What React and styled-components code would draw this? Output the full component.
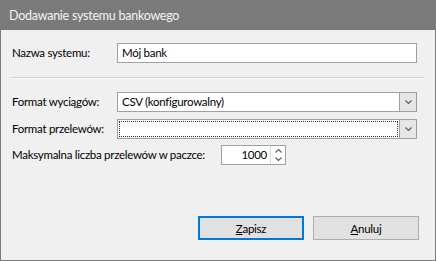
import React from 'react';
import styled, { createGlobalStyle } from 'styled-components';

const Global = createGlobalStyle`
  html, body { margin: 0; padding: 0; background: #f0f0f0; }
  * { box-sizing: border-box; }
`;

const Window = styled.div`
  width: 436px;
  height: 261px;
  display: flex;
  flex-direction: column;
  border: 1px solid #7a7a7a;
  border-top: none;
  background: #f0f0f0;
  font-family: Lato, 'Open Sans', sans-serif;
  font-size: 11.5px;
  letter-spacing: -0.28px;
  color: #000;
`;

const TitleBar = styled.div`
  height: 30px;
  flex: none;
  display: flex;
  align-items: center;
  padding-left: 9px;
  margin: 0 -1px;
  background: #7a7a7a;
  color: #f4f4f4;
  font-size: 12.5px;
  letter-spacing: -0.25px;
`;

const Body = styled.div`
  flex: 1;
  display: flex;
  flex-direction: column;
  padding: 12px 18px 0 11px;
`;

const Row = styled.div`
  display: flex;
  align-items: center;
  height: 21px;
  margin-top: ${p => p.$gap || 0}px;
`;

const Label = styled.div`
  width: ${p => p.$w || 105}px;
  flex: none;
  white-space: nowrap;
`;

const TextInput = styled.div`
  flex: 1;
  height: 20px;
  border: 1px solid #a0a0a0;
  background: #fff;
  display: flex;
  align-items: center;
  padding-left: 4px;
`;

const Separator = styled.div`
  height: 2px;
  margin: 14px -7px 0 -2px;
  border-top: 1px solid #d5d5d5;
  border-bottom: 1px solid #fbfbfb;
`;

const Combo = styled.div`
  flex: 1;
  height: 20px;
  border: 1px solid #a0a0a0;
  background: #fff;
  display: flex;
`;

const ComboText = styled.div`
  flex: 1;
  display: flex;
  align-items: center;
  padding-left: 2px;
  margin: 1px;
  border: 1px ${p => (p.$focus ? 'dotted #333' : 'solid transparent')};
`;

const DropButton = styled.div`
  width: 17px;
  flex: none;
  border-left: 1px solid #a0a0a0;
  background: #e6e6e6;
  display: flex;
  align-items: center;
  justify-content: center;
`;

const Spinner = styled.div`
  width: 65px;
  height: 20px;
  margin-left: 1px;
  border: 1px solid #a0a0a0;
  background: #fff;
  display: flex;
`;

const SpinValue = styled.div`
  flex: 1;
  text-align: right;
  padding-right: 3px;
  line-height: 18px;
`;

const SpinButtons = styled.div`
  width: 15px;
  flex: none;
  border-left: 1px solid #d9d9d9;
  display: flex;
  flex-direction: column;
  align-items: center;
  justify-content: space-around;
  padding: 1px 0;
`;

const Footer = styled.div`
  margin-top: auto;
  margin-bottom: 20px;
  display: flex;
  justify-content: flex-end;
  gap: 9px;
  margin-right: -2px;
`;

const Button = styled.div`
  width: 106px;
  height: 24px;
  display: flex;
  align-items: center;
  justify-content: center;
  background: #e1e1e1;
  border: ${p => (p.$primary ? '2px solid #0078d7' : '1px solid #adadad')};
`;

const Chevron = ({ up }) => (
  <svg width="7" height="4" viewBox="0 0 7 4">
    <path
      d={up ? 'M0.5 3.5 L3.5 0.5 L6.5 3.5' : 'M0.5 0.5 L3.5 3.5 L6.5 0.5'}
      fill="none"
      stroke="#606060"
      strokeWidth="1.2"
    />
  </svg>
);

export default function App() {
  return (
    <>
      <Global />
      <Window>
        <TitleBar>Dodawanie systemu bankowego</TitleBar>
        <Body>
          <Row>
            <Label>Nazwa systemu:</Label>
            <TextInput>Mój bank</TextInput>
          </Row>
          <Separator />
          <Row $gap={12}>
            <Label>Format wyciągów:</Label>
            <Combo>
              <ComboText>CSV (konfigurowalny)</ComboText>
              <DropButton><Chevron /></DropButton>
            </Combo>
          </Row>
          <Row $gap={6}>
            <Label>Format przelewów:</Label>
            <Combo>
              <ComboText $focus />
              <DropButton><Chevron /></DropButton>
            </Combo>
          </Row>
          <Row $gap={5}>
            <Label $w={208}>Maksymalna liczba przelewów w paczce:</Label>
            <Spinner>
              <SpinValue>1000</SpinValue>
              <SpinButtons>
                <Chevron up />
                <Chevron />
              </SpinButtons>
            </Spinner>
          </Row>
          <Footer>
            <Button $primary><span><u>Z</u>apisz</span></Button>
            <Button><span><u>A</u>nuluj</span></Button>
          </Footer>
        </Body>
      </Window>
    </>
  );
}
